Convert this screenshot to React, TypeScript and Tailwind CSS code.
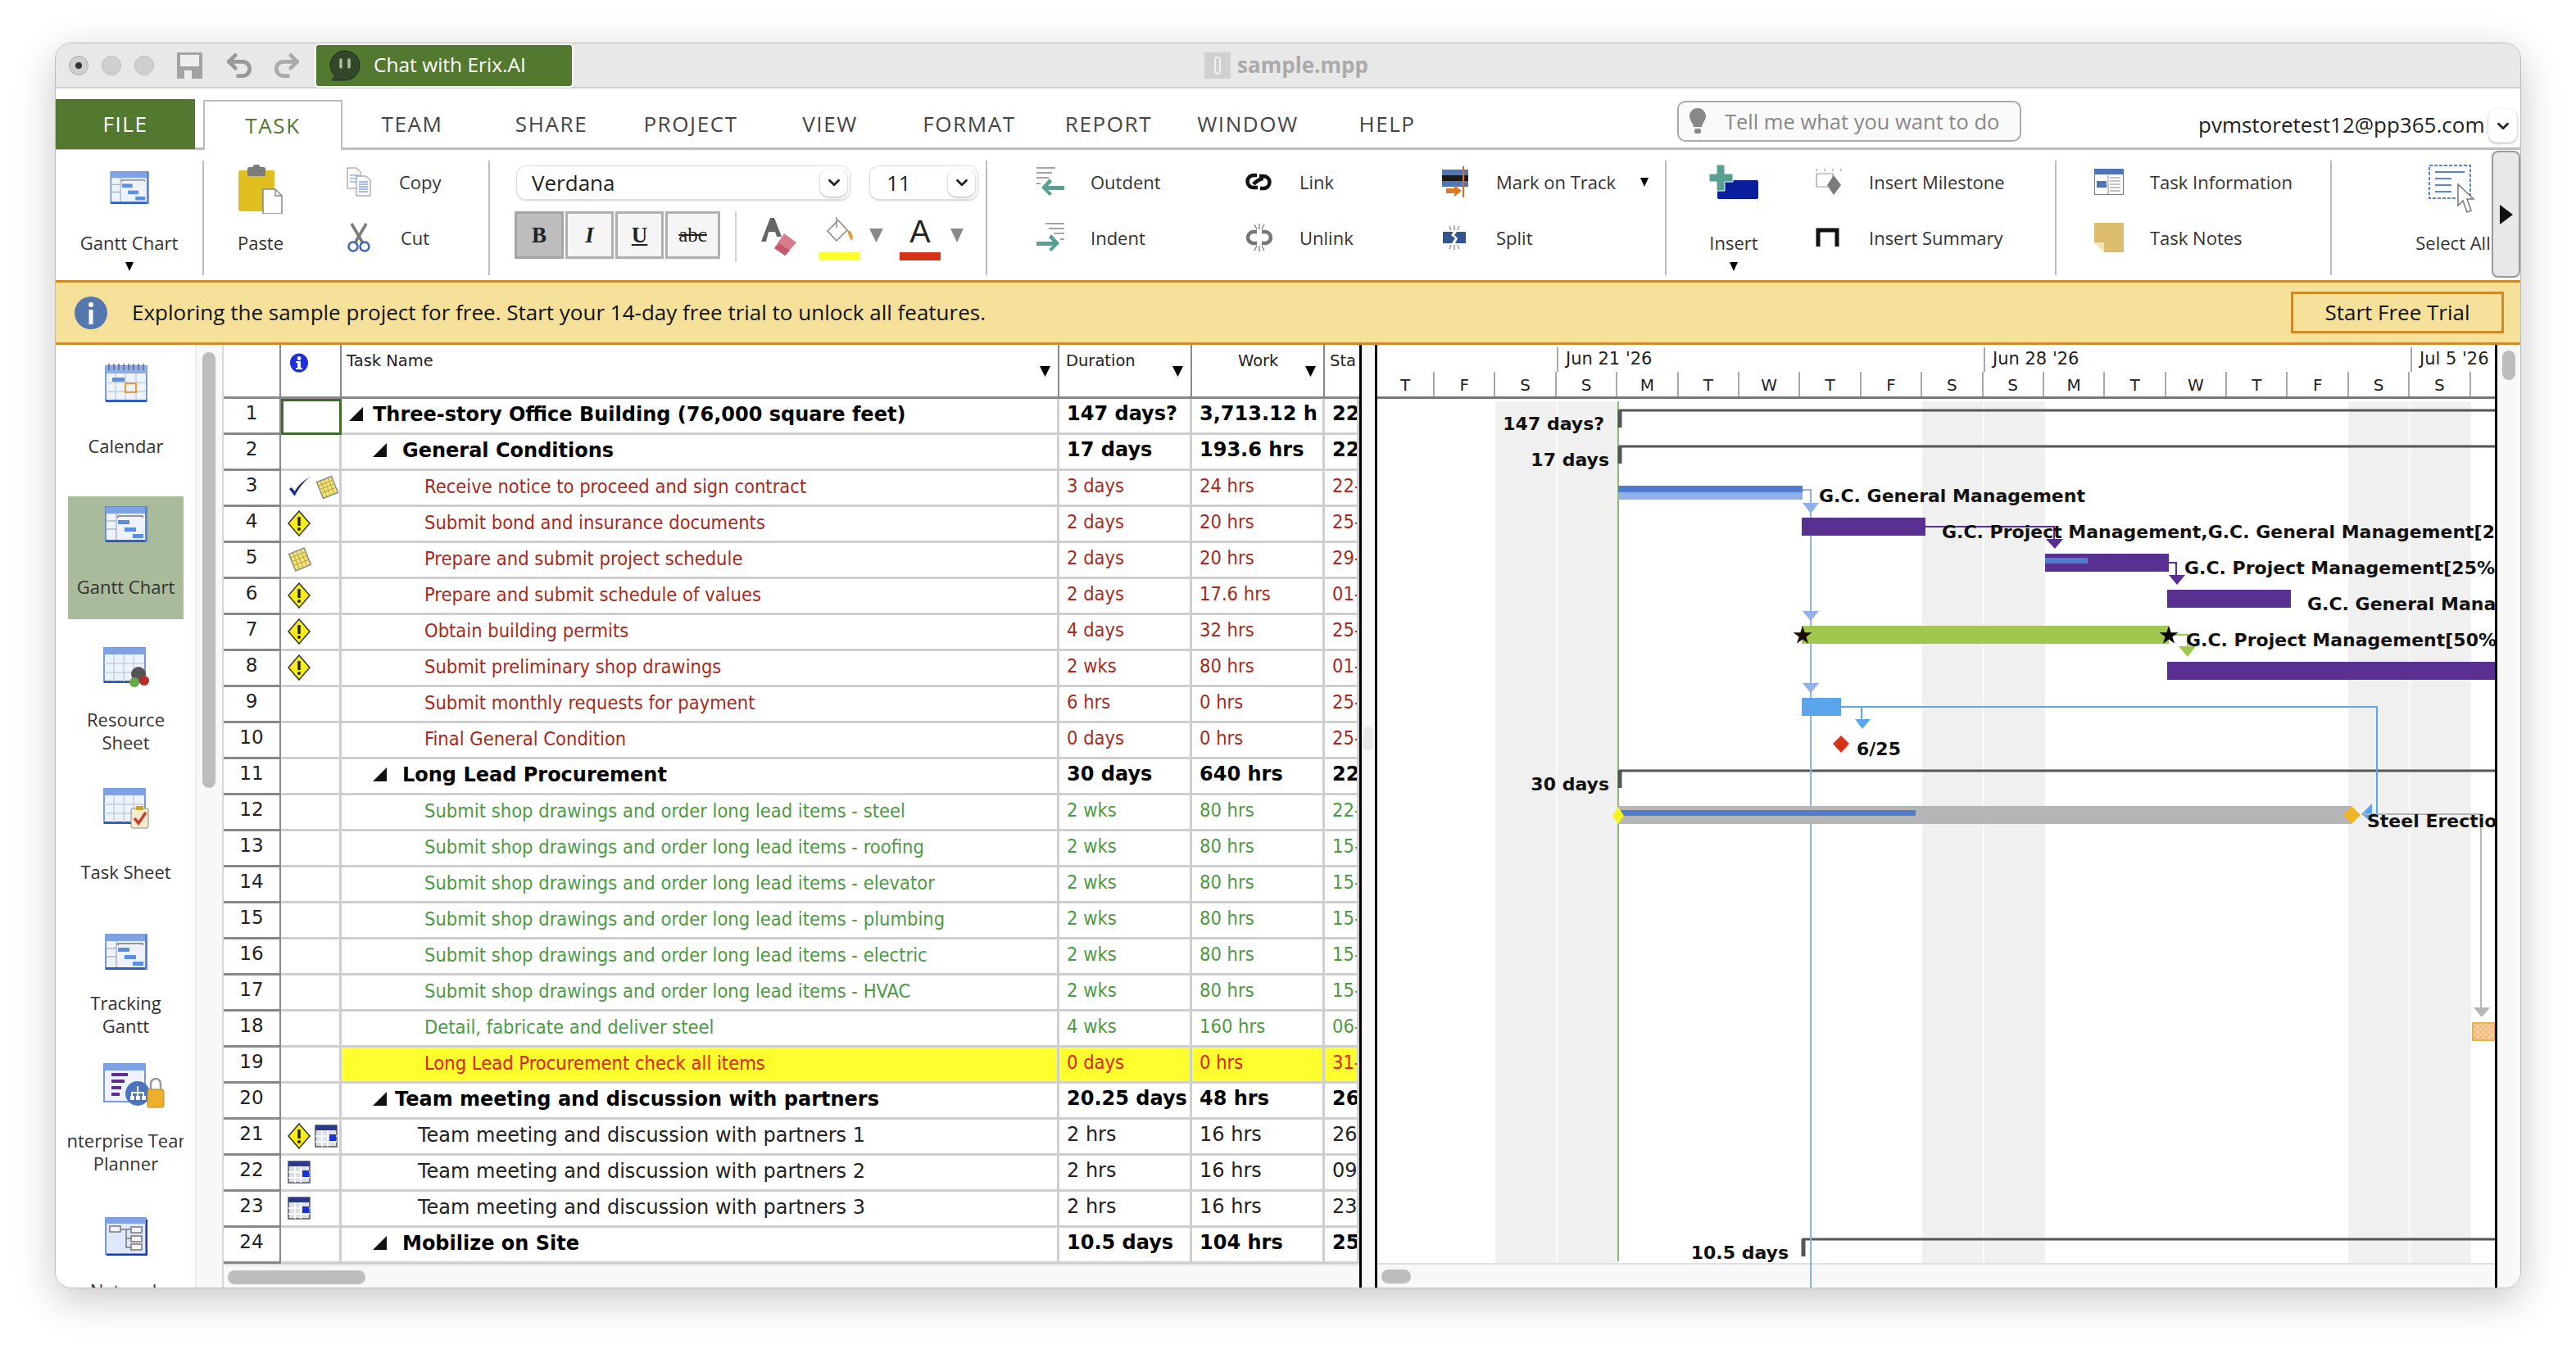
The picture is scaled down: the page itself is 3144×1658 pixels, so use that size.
import React from 'react';
import { ChevronDown, Undo2, Redo2 } from 'lucide-react';

type Kind = 'summary' | 'red' | 'green' | 'plain' | 'flag';
type Mark = 'check' | 'note' | 'warn' | 'cal';
interface Row { name: string; dur: string; work: string; start: string; kind: Kind; x: string; marks?: Mark[] }

const ROWS: Row[] = [
  { name: 'Three-story Office Building (76,000 square feet)', dur: '147 days?', work: '3,713.12 h', start: '22-Jun-26', kind: 'summary', x: 'ml-[9px] gap-[12px]' },
  { name: 'General Conditions', dur: '17 days', work: '193.6 hrs', start: '22-Jun-26', kind: 'summary', x: 'ml-[38px] gap-[19px]' },
  { name: 'Receive notice to proceed and sign contract', dur: '3 days', work: '24 hrs', start: '22-Jun-26', kind: 'red', x: 'ml-[101px]', marks: ['check', 'note'] },
  { name: 'Submit bond and insurance documents', dur: '2 days', work: '20 hrs', start: '25-Jun-26', kind: 'red', x: 'ml-[101px]', marks: ['warn'] },
  { name: 'Prepare and submit project schedule', dur: '2 days', work: '20 hrs', start: '29-Jun-26', kind: 'red', x: 'ml-[101px]', marks: ['note'] },
  { name: 'Prepare and submit schedule of values', dur: '2 days', work: '17.6 hrs', start: '01-Jul-26', kind: 'red', x: 'ml-[101px]', marks: ['warn'] },
  { name: 'Obtain building permits', dur: '4 days', work: '32 hrs', start: '25-Jun-26', kind: 'red', x: 'ml-[101px]', marks: ['warn'] },
  { name: 'Submit preliminary shop drawings', dur: '2 wks', work: '80 hrs', start: '01-Jul-26', kind: 'red', x: 'ml-[101px]', marks: ['warn'] },
  { name: 'Submit monthly requests for payment', dur: '6 hrs', work: '0 hrs', start: '25-Jun-26', kind: 'red', x: 'ml-[101px]' },
  { name: 'Final General Condition', dur: '0 days', work: '0 hrs', start: '25-Jun-26', kind: 'red', x: 'ml-[101px]' },
  { name: 'Long Lead Procurement', dur: '30 days', work: '640 hrs', start: '22-Jun-26', kind: 'summary', x: 'ml-[38px] gap-[19px]' },
  { name: 'Submit shop drawings and order long lead items - steel', dur: '2 wks', work: '80 hrs', start: '22-Jun-26', kind: 'green', x: 'ml-[101px]' },
  { name: 'Submit shop drawings and order long lead items - roofing', dur: '2 wks', work: '80 hrs', start: '15-Jul-26', kind: 'green', x: 'ml-[101px]' },
  { name: 'Submit shop drawings and order long lead items - elevator', dur: '2 wks', work: '80 hrs', start: '15-Jul-26', kind: 'green', x: 'ml-[101px]' },
  { name: 'Submit shop drawings and order long lead items - plumbing', dur: '2 wks', work: '80 hrs', start: '15-Jul-26', kind: 'green', x: 'ml-[101px]' },
  { name: 'Submit shop drawings and order long lead items - electric', dur: '2 wks', work: '80 hrs', start: '15-Jul-26', kind: 'green', x: 'ml-[101px]' },
  { name: 'Submit shop drawings and order long lead items - HVAC', dur: '2 wks', work: '80 hrs', start: '15-Jul-26', kind: 'green', x: 'ml-[101px]' },
  { name: 'Detail, fabricate and deliver steel', dur: '4 wks', work: '160 hrs', start: '06-Jul-26', kind: 'green', x: 'ml-[101px]' },
  { name: 'Long Lead Procurement check all items', dur: '0 days', work: '0 hrs', start: '31-Jul-26', kind: 'flag', x: 'ml-[101px]' },
  { name: 'Team meeting and discussion with partners', dur: '20.25 days', work: '48 hrs', start: '26-Jun-26', kind: 'summary', x: 'ml-[38px] gap-[10px]' },
  { name: 'Team meeting and discussion with partners 1', dur: '2 hrs', work: '16 hrs', start: '26-Jun-26', kind: 'plain', x: 'ml-[93px]', marks: ['warn', 'cal'] },
  { name: 'Team meeting and discussion with partners 2', dur: '2 hrs', work: '16 hrs', start: '09-Jul-26', kind: 'plain', x: 'ml-[93px]', marks: ['cal'] },
  { name: 'Team meeting and discussion with partners 3', dur: '2 hrs', work: '16 hrs', start: '23-Jul-26', kind: 'plain', x: 'ml-[93px]', marks: ['cal'] },
  { name: 'Mobilize on Site', dur: '10.5 days', work: '104 hrs', start: '25-Jun-26', kind: 'summary', x: 'ml-[38px] gap-[19px]' },
];

const DAYS = ['T', 'F', 'S', 'S', 'M', 'T', 'W', 'T', 'F', 'S', 'S', 'M', 'T', 'W', 'T', 'F', 'S', 'S'];
const TABS = ['TASK', 'TEAM', 'SHARE', 'PROJECT', 'VIEW', 'FORMAT', 'REPORT', 'WINDOW', 'HELP'];

const KIND_TEXT: Record<Kind, string> = {
  summary: "font-bold text-black font-['DejaVu_Sans',sans-serif] text-[24px]",
  red: "text-[#a52b1c] font-['DejaVu_Sans_Condensed','DejaVu_Sans',sans-serif] text-[23.5px]",
  green: "text-[#4c9a42] font-['DejaVu_Sans_Condensed','DejaVu_Sans',sans-serif] text-[23.5px]",
  plain: "text-[#222] font-['DejaVu_Sans',sans-serif] text-[24px]",
  flag: "text-[#e3201b] font-['DejaVu_Sans_Condensed','DejaVu_Sans',sans-serif] text-[23.5px]",
};

function Frame({ children, w = 52, h = 44 }: { children?: React.ReactNode; w?: number; h?: number }) {
  return (
    <svg width={w} height={h} viewBox="0 0 52 44">
      <rect x="1" y="1" width="50" height="42" fill="#eef2fb" stroke="#4f79cf" strokeWidth="1.5" />
      <rect x="1" y="1" width="50" height="8" fill="#7fa2e4" />
      <rect x="1" y="41" width="50" height="3" fill="#2f5dbd" />
      <rect x="49" y="1" width="3" height="43" fill="#5d86d8" />
      {children}
    </svg>
  );
}

function GanttGlyph({ w = 52, h = 44 }: { w?: number; h?: number }) {
  return (
    <Frame w={w} h={h}>
      <path d="M1 18H14M1 28H14M14 9V41" stroke="#aab6cc" strokeWidth="1.5" />
      <path d="M16 14V12H46V14" fill="none" stroke="#777" strokeWidth="1.5" />
      <rect x="16" y="17" width="14" height="5" fill="#5b8de0" />
      <rect x="24" y="26" width="14" height="5" fill="#5b8de0" />
      <rect x="34" y="34" width="13" height="5" fill="#5b8de0" />
    </Frame>
  );
}

function SheetGlyph({ extra }: { extra?: React.ReactNode }) {
  return (
    <svg width="56" height="50" viewBox="0 0 56 50">
      <rect x="1" y="1" width="50" height="42" fill="#eef2fb" stroke="#4f79cf" strokeWidth="1.5" />
      <rect x="1" y="1" width="50" height="8" fill="#7fa2e4" />
      <rect x="1" y="41" width="50" height="3" fill="#2f5dbd" />
      <path d="M13 9V42M25 9V42M37 9V42M1 20H50M1 31H50" stroke="#c5cfe2" strokeWidth="1.5" />
      {extra}
    </svg>
  );
}

function CalendarGlyph() {
  return (
    <svg width="52" height="48" viewBox="0 0 52 48">
      <rect x="1" y="4" width="50" height="42" fill="#eef2fb" stroke="#4f79cf" strokeWidth="1.5" />
      <rect x="1" y="4" width="50" height="9" fill="#8eaee6" />
      <path d="M5 1V9M11 1V9M17 1V9M23 1V9M29 1V9M35 1V9M41 1V9M47 1V9" stroke="#667" strokeWidth="1.5" />
      <path d="M13 13V46M25 13V46M38 13V46M1 24H50M1 35H50" stroke="#c5cfe2" strokeWidth="1.5" />
      <rect x="9" y="18" width="15" height="5" fill="#5b8de0" />
      <rect x="25" y="25" width="13" height="11" fill="none" stroke="#e79a3a" strokeWidth="2" />
      <rect x="1" y="45" width="50" height="3" fill="#2f5dbd" />
    </svg>
  );
}

function EnterpriseGlyph() {
  return (
    <svg width="76" height="56" viewBox="0 0 76 56" className="ml-[20px]">
      <rect x="1" y="1" width="50" height="46" fill="#eef2fb" stroke="#4f79cf" strokeWidth="1.5" />
      <rect x="1" y="1" width="50" height="8" fill="#7fa2e4" />
      <path d="M10 14H30M10 22H26M10 30H22M10 38H20" stroke="#5a2f96" strokeWidth="4" />
      <circle cx="42" cy="37" r="15" fill="#4a73c0" />
      <path d="M42 28V33M35 40V36H49V40M42 33V40" stroke="#fff" strokeWidth="2" fill="none" />
      <rect x="33" y="40" width="5" height="5" fill="#fff" />
      <rect x="40" y="40" width="5" height="5" fill="#fff" />
      <rect x="47" y="40" width="5" height="5" fill="#fff" />
      <rect x="54" y="32" width="20" height="22" rx="2" fill="#eab02c" stroke="#b98a1f" />
      <path d="M58 32V25a6 6 0 0 1 12 0V32" fill="none" stroke="#999" strokeWidth="2.5" />
    </svg>
  );
}

function NetworkGlyph() {
  return (
    <svg width="52" height="47" viewBox="0 0 52 47">
      <rect x="1" y="1" width="49" height="44" fill="#dfe7fb" stroke="#4f79cf" strokeWidth="1.5" />
      <rect x="1" y="1" width="49" height="7" fill="#7fa2e4" />
      <path d="M50 3H52V47H2V45H50Z" fill="#1c3a9e" />
      <g fill="#f4f4f4" stroke="#777" strokeWidth="1.5">
        <rect x="6" y="11" width="13" height="7" />
        <rect x="32" y="12" width="13" height="7" />
        <rect x="32" y="23" width="13" height="7" />
        <rect x="32" y="33" width="13" height="7" />
      </g>
      <path d="M19 15H32M26 15V37H32M26 26H32" stroke="#777" strokeWidth="1.5" fill="none" />
    </svg>
  );
}

function Warn() {
  return (
    <svg width="28" height="32" viewBox="0 0 28 32">
      <path d="M14 1L27 16L14 31L1 16Z" fill="#f7ec16" stroke="#333" strokeWidth="1.5" />
      <path d="M14 8V19" stroke="#222" strokeWidth="3.5" />
      <circle cx="14" cy="23" r="2" fill="#222" />
    </svg>
  );
}

function Note() {
  return (
    <svg width="30" height="32" viewBox="0 0 30 32">
      <g transform="rotate(-22 15 16)">
        <rect x="5" y="5" width="20" height="22" fill="#f3e27a" stroke="#888" strokeWidth="1.5" />
        <path d="M5 10H25M5 15H25M5 20H25M10 5V27M15 5V27M20 5V27" stroke="#b7a746" strokeWidth="1" />
      </g>
    </svg>
  );
}

function Check() {
  return (
    <svg width="30" height="32" viewBox="0 0 30 32">
      <path d="M2 18L9 27C14 17 21 8 29 2C20 7 13 14 9 21L5 16Z" fill="#1c2f8c" />
    </svg>
  );
}

function CalMark() {
  return (
    <svg width="28" height="28" viewBox="0 0 28 28">
      <rect x="1" y="1" width="26" height="26" fill="#dde0e6" stroke="#555" strokeWidth="1.5" />
      <rect x="1" y="1" width="26" height="6" fill="#2a3a8a" />
      <path d="M9 7V27M16 7V27M1 14H27M1 21H27" stroke="#fff" strokeWidth="1.5" />
      <rect x="18" y="12" width="8" height="8" fill="#1533d6" />
    </svg>
  );
}

function MarkIcon({ m }: { m: Mark }) {
  if (m === 'warn') return <Warn />;
  if (m === 'note') return <Note />;
  if (m === 'check') return <Check />;
  return <CalMark />;
}

function DownTri({ className = 'text-black', w = 12, h = 12 }: { className?: string; w?: number; h?: number }) {
  return (
    <svg width={w} height={h} viewBox="0 0 12 12" preserveAspectRatio="none" className={className}>
      <polygon points="0,0 12,0 6,12" fill="currentColor" />
    </svg>
  );
}

function RibbonChevron({ className }: { className: string }) {
  return (
    <span className={`flex items-center justify-center rounded-[10px] bg-white shadow-[0_1px_3px_rgba(0,0,0,0.35)] ${className}`}>
      <ChevronDown size={22} strokeWidth={3} className="text-[#222]" />
    </span>
  );
}

function BigButton({ label, icon, arrow, iconTop = 'mt-0' }: { label: string; icon: React.ReactNode; arrow?: boolean; iconTop?: string }) {
  return (
    <div className="flex w-full flex-col items-center pt-[5px]">
      <div className={`flex h-[58px] shrink-0 items-start justify-center ${iconTop}`}>{icon}</div>
      <div className="mt-[22px] h-[30px] whitespace-nowrap text-[22px] leading-[30px] text-[#333]">{label}</div>
      {arrow && <DownTri className="mt-[9px] text-black" w={10} h={11} />}
    </div>
  );
}

function SmallItem({ label, icon, slot = 'w-[66px]', suffix }: { label: string; icon: React.ReactNode; slot?: string; suffix?: React.ReactNode }) {
  return (
    <div className="flex h-[44px] items-center">
      <span className={`flex shrink-0 items-center ${slot}`}>{icon}</span>
      <span className="whitespace-nowrap text-[22px] text-[#333]">{label}</span>
      {suffix}
    </div>
  );
}

function RibbonBar() {
  return (
    <div className="relative flex h-[159px] bg-white pb-[6px] pt-[13px]">
      {/* view */}
      <div className="h-[140px] w-[181px] shrink-0 border-r-2 border-[#bdbdbd]">
        <BigButton label="Gantt Chart" arrow icon={<GanttGlyph w={48} h={40} />} iconTop="pt-[8px]" />
      </div>

      {/* clipboard */}
      <div className="flex h-[140px] w-[349px] shrink-0 border-r-2 border-[#bdbdbd]">
        <div className="w-[138px]">
          <BigButton
            label="Paste"
            icon={
              <svg width="56" height="60" viewBox="0 0 56 60">
                <rect x="1" y="7" width="44" height="50" rx="2" fill="#e0c020" />
                <rect x="12" y="3" width="22" height="11" rx="2" fill="#7b7b7b" />
                <rect x="19" y="0" width="8" height="6" rx="2" fill="#7b7b7b" />
                <path d="M31 30H46L54 38V60H31Z" fill="#fff" stroke="#888" strokeWidth="1.5" />
                <path d="M46 30V38H54" fill="none" stroke="#888" strokeWidth="1.5" />
              </svg>
            }
          />
        </div>
        <div className="ml-[36px] flex flex-col gap-[24px] pt-[4px]">
          <SmallItem
            label="Copy"
            slot="w-[64px]"
            icon={
              <svg width="30" height="36" viewBox="0 0 30 36">
                <path d="M1 1H12L17 6V26H1Z" fill="#fff" stroke="#8a8a8a" />
                <path d="M4 10H14M4 14H14M4 18H14" stroke="#5b8de0" />
                <path d="M12 11H24L29 16V35H12Z" fill="#fff" stroke="#8a8a8a" />
                <path d="M15 18H26M15 21H26M15 24H26M15 27H26M15 30H26" stroke="#4a74c9" />
              </svg>
            }
          />
          <SmallItem
            label="Cut"
            slot="w-[66px]"
            icon={
              <svg width="30" height="36" viewBox="0 0 30 36">
                <path d="M6 1L20 25M24 1L10 25" stroke="#7b7b7b" strokeWidth="3.5" />
                <circle cx="8" cy="29" r="5.5" fill="none" stroke="#3b67b8" strokeWidth="2.5" />
                <circle cx="22" cy="29" r="5.5" fill="none" stroke="#3b67b8" strokeWidth="2.5" />
              </svg>
            }
          />
        </div>
      </div>

      {/* font */}
      <div className="h-[140px] w-[607px] shrink-0 border-r-2 border-[#bdbdbd] pl-[32px] pt-[6px]">
        <div className="flex gap-[23px]">
          <div className="flex h-[42px] w-[408px] items-center justify-between rounded-[12px] border border-[#ddd] pl-[18px] pr-[3px] shadow-[0_1px_2px_rgba(0,0,0,0.2)]">
            <span className="text-[26px] text-[#222]">Verdana</span>
            <RibbonChevron className="h-[33px] w-[33px]" />
          </div>
          <div className="flex h-[42px] w-[133px] items-center justify-between rounded-[12px] border border-[#ddd] pl-[20px] pr-[3px] shadow-[0_1px_2px_rgba(0,0,0,0.2)]">
            <span className="text-[26px] text-[#222]">11</span>
            <RibbonChevron className="h-[33px] w-[33px]" />
          </div>
        </div>
        <div className="ml-[-2px] mt-[14px] flex items-start">
          <div className="flex gap-[2px] font-['Liberation_Serif',serif] text-[27px] text-[#222]">
            <span className="flex h-[58px] w-[60px] items-center justify-center border-[3px] border-[#a5a5a5] bg-[#bdbdbd] font-bold">B</span>
            <span className="flex h-[58px] w-[59px] items-center justify-center border-[3px] border-[#b0b0b0] bg-[#f5f5f5] font-bold italic">I</span>
            <span className="flex h-[58px] w-[59px] items-center justify-center border-[3px] border-[#b0b0b0] bg-[#f5f5f5] font-bold underline">U</span>
            <span className="flex h-[58px] w-[67px] items-center justify-center border-[3px] border-[#b0b0b0] bg-[#f5f5f5] text-[25px] line-through">abc</span>
          </div>
          <span className="ml-[18px] h-[62px] w-[2px] bg-[#d0d0d0]" />
          <svg width="46" height="48" viewBox="0 0 46 48" className="ml-[28px] mt-[7px]">
            <path d="M2 30L13 1H18L27 24H21L19 18H11L8 30Z" fill="#666" />
            <path d="M30 20L45 31L31 47L18 38Z" fill="#d97b8c" />
            <path d="M18 38L24 32L37 41L31 47Z" fill="#c4586c" />
          </svg>
          <div className="ml-[27px] flex w-[50px] flex-col items-center pt-[6px]">
            <svg width="36" height="38" viewBox="0 0 36 38">
              <path d="M3 18L16 5L27 17L14 30Z" fill="#fff" stroke="#888" strokeWidth="1.5" />
              <path d="M14 1V14" stroke="#888" strokeWidth="1.5" />
              <path d="M27 17C33 18 35 24 33 30C30 27 28 22 27 17Z" fill="#e79a3a" />
            </svg>
            <span className="mt-[6px] h-[10px] w-full bg-[#ffff2e]" />
          </div>
          <DownTri className="ml-[11px] mt-[21px] text-[#888]" w={17} h={17} />
          <div className="ml-[20px] flex w-[50px] flex-col items-center">
            <span className="h-[50px] font-['Liberation_Sans',sans-serif] text-[38px] leading-[50px] text-[#222]">A</span>
            <span className="h-[10px] w-full bg-[#d6321a]" />
          </div>
          <DownTri className="ml-[12px] mt-[21px] text-[#888]" w={16} h={17} />
        </div>
      </div>

      {/* schedule */}
      <div className="grid h-[140px] w-[829px] shrink-0 grid-cols-[256px_240px_1fr] content-start gap-y-[24px] border-r-2 border-[#bdbdbd] pl-[59px] pt-[4px]">
        <SmallItem
          label="Outdent"
          slot="w-[67px]"
          icon={
            <svg width="36" height="36" viewBox="0 0 36 36">
              <path d="M1 1H24M1 7H20M1 13H16M1 20H6" stroke="#888" strokeWidth="1.5" />
              <path d="M17 14L7 25L17 35L20 32L15 28H35V23H15L20 18Z" fill="#58a090" />
            </svg>
          }
        />
        <SmallItem
          label="Link"
          icon={
            <svg width="32" height="26" viewBox="0 0 32 26">
              <path d="M14 5H10a7.5 7.5 0 0 0 0 15h5M18 21h4a7.5 7.5 0 0 0 0-15h-5M10 16C13 12 19 9 22 9" fill="none" stroke="#111" strokeWidth="4.5" />
            </svg>
          }
        />
        <SmallItem
          label="Mark on Track"
          icon={
            <svg width="34" height="38" viewBox="0 0 34 38">
              <rect x="0" y="4" width="32" height="21" fill="#4f77b5" />
              <rect x="0" y="11" width="32" height="7" fill="#1a1a1a" />
              <path d="M26 0V38" stroke="#c9742a" strokeWidth="2" />
              <path d="M5 27H15V23L24 30L15 37V33H5Z" fill="#d97a26" />
            </svg>
          }
          suffix={<DownTri className="ml-[30px] text-black" w={10} h={11} />}
        />
        <SmallItem
          label="Indent"
          slot="w-[67px]"
          icon={
            <svg width="36" height="36" viewBox="0 0 36 36">
              <path d="M12 1H35M16 7H35M22 13H35M30 20H35" stroke="#888" strokeWidth="1.5" />
              <path d="M19 14L29 25L19 35L16 32L21 28H1V23H21L16 18Z" fill="#58a090" />
            </svg>
          }
        />
        <SmallItem
          label="Unlink"
          icon={
            <svg width="34" height="36" viewBox="0 0 34 36">
              <path d="M14 11H10a7 7 0 0 0 0 14h4M20 11h4a7 7 0 0 1 0 14h-4" fill="none" stroke="#777" strokeWidth="4.5" />
              <path d="M17 1V8M11 2L14 8M23 2L20 8M17 28V35M11 34L14 28M23 34L20 28" stroke="#777" strokeWidth="1.2" />
            </svg>
          }
        />
        <SmallItem
          label="Split"
          icon={
            <svg width="30" height="30" viewBox="0 0 30 30">
              <path d="M1 8H14L11 12L16 16L12 22H1Z" fill="#35558f" />
              <path d="M29 8H18L15 12L19 16L16 22H29Z" fill="#35558f" />
              <path d="M9 1L11 6M15 0V6M21 1L19 6M9 29L11 24M15 30V24M21 29L19 24" stroke="#667" strokeWidth="1" />
            </svg>
          }
        />
      </div>

      {/* insert */}
      <div className="flex h-[140px] w-[476px] shrink-0 border-r-2 border-[#bdbdbd]">
        <div className="w-[164px]">
          <BigButton
            label="Insert"
            arrow
            icon={
              <svg width="60" height="42" viewBox="0 0 60 42">
                <rect x="10" y="19" width="50" height="23" rx="2" fill="#0a1e9e" />
                <path d="M9 0H19V11H29V21H19V32H9V21H0V11H9Z" fill="#58a090" stroke="#fff" strokeWidth="1" />
              </svg>
            }
          />
        </div>
        <div className="ml-[18px] flex flex-col gap-[24px] pt-[4px]">
          <SmallItem
            label="Insert Milestone"
            slot="w-[65px]"
            icon={
              <svg width="32" height="32" viewBox="0 0 32 32">
                <path d="M1 0V3M11 0V3M21 0V3M31 0V3M1 6H21V22H1Z" fill="none" stroke="#999" strokeWidth="1.2" />
                <path d="M22 8L31 20L22 32L14 20Z" fill="#7b7b7b" />
              </svg>
            }
          />
          <SmallItem
            label="Insert Summary"
            slot="w-[65px]"
            icon={
              <svg width="30" height="24" viewBox="0 0 30 24">
                <path d="M3 23V3H26V23" fill="none" stroke="#111" strokeWidth="5" />
              </svg>
            }
          />
        </div>
      </div>

      {/* properties */}
      <div className="flex h-[140px] w-[336px] shrink-0 flex-col gap-[24px] border-r-2 border-[#bdbdbd] pl-[46px] pt-[4px]">
        <SmallItem
          label="Task Information"
          slot="w-[68px]"
          icon={
            <svg width="36" height="32" viewBox="0 0 36 32">
              <rect x="0.5" y="0.5" width="35" height="31" fill="#fff" stroke="#777" />
              <rect x="0" y="0" width="36" height="7" fill="#4f73b5" />
              <rect x="3" y="15" width="12" height="8" fill="#4f73b5" />
              <path d="M19 11H32M19 15H32M19 19H32M19 23H32M19 27H32M17 8V31" stroke="#888" />
            </svg>
          }
        />
        <SmallItem
          label="Task Notes"
          slot="w-[68px]"
          icon={
            <svg width="36" height="36" viewBox="0 0 36 36">
              <path d="M0 0H36V36H12L0 24Z" fill="#dcbd6e" />
              <path d="M0 24H12V36Z" fill="#f3e6bf" />
            </svg>
          }
        />
      </div>

      {/* select */}
      <div className="h-[140px] w-[195px] shrink-0 overflow-hidden pl-[88px]">
        <div className="w-[120px]">
          <BigButton
            label="Select All"
            icon={
              <svg width="60" height="60" viewBox="0 0 60 60">
                <rect x="1" y="1" width="50" height="40" fill="#fff" stroke="#5b84cf" strokeWidth="2" strokeDasharray="4 2" />
                <path d="M8 9H44M8 17H28M8 25H28M8 33H28" stroke="#5b84cf" strokeWidth="2" />
                <path d="M36 24V50L42 44L47 58L52 56L47 42H55Z" fill="#fff" stroke="#777" strokeWidth="1.5" />
              </svg>
            }
          />
        </div>
      </div>

      {/* scroller */}
      <div className="absolute bottom-[3px] right-0 top-[1px] flex w-[35px] items-center justify-center rounded-[8px] border-2 border-[#999] bg-[#e8e8e8]">
        <svg width="16" height="24" viewBox="0 0 16 24">
          <polygon points="0,0 16,12 0,24" fill="#111" />
        </svg>
      </div>
    </div>
  );
}

function Sidebar() {
  return (
    <div className="flex w-[172px] shrink-0 flex-col gap-[22px] overflow-hidden border-r-2 border-[#eee] pt-[13px] text-[22px] leading-[28px] text-[#333]">
      <SideItem icon={<CalendarGlyph />} iconClass="mt-[-3px]" lines={['Calendar']} />
      <SideItem icon={<GanttGlyph />} lines={['Gantt Chart']} active />
      <SideItem
        icon={
          <SheetGlyph
            extra={
              <g>
                <circle cx="43" cy="33" r="9" fill="#555" />
                <circle cx="38" cy="43" r="6" fill="#66aa44" />
                <circle cx="50" cy="41" r="6" fill="#b5302a" />
              </g>
            }
          />
        }
        lines={['Resource', 'Sheet']}
      />
      <SideItem
        icon={
          <SheetGlyph
            extra={
              <g>
                <rect x="34" y="25" width="21" height="24" rx="2" fill="#f5ecd0" stroke="#888" />
                <rect x="40" y="22" width="9" height="5" fill="#c9a53a" />
                <path d="M38 37L43 43L52 30" fill="none" stroke="#d03a2a" strokeWidth="3.5" />
              </g>
            }
          />
        }
        labelClass="mt-[38px]"
        lines={['Task Sheet']}
      />
      <SideItem icon={<GanttGlyph />} iconClass="mt-[6px]" labelClass="mt-[26px]" lines={['Tracking', 'Gantt']} />
      <SideItem icon={<EnterpriseGlyph />} iconClass="mt-[-8px]" labelClass="mt-[22px]" lines={['Enterprise Team', 'Planner']} />
      <SideItem icon={<NetworkGlyph />} iconClass="mt-[8px]" labelClass="mt-[33px]" lines={['Network']} />
    </div>
  );
}

function SideItem({ icon, lines, active, iconClass = '', labelClass }: { icon: React.ReactNode; lines: string[]; active?: boolean; iconClass?: string; labelClass?: string }) {
  const top = labelClass ?? (lines.length > 1 ? 'mt-[24px]' : 'mt-[34px]');
  return (
    <div className={`ml-[15px] flex h-[150px] w-[141px] shrink-0 flex-col items-center pt-[12px] ${active ? 'bg-[#a9bb9b]' : ''}`}>
      <div className="flex h-[50px] shrink-0 items-start">
        <div className={iconClass}>{icon}</div>
      </div>
      <div className={`w-full overflow-hidden ${top}`}>
        {lines.map(l => (
          <div key={l} className="flex justify-center whitespace-nowrap">
            <span className="shrink-0">{l}</span>
          </div>
        ))}
      </div>
    </div>
  );
}

function TableGrid() {
  return (
    <div className="flex w-[1386px] shrink-0 flex-col bg-white">
      <div className="flex h-[66px] shrink-0 border-b-[3px] border-[#888] font-['DejaVu_Sans',sans-serif] text-[19.5px] text-[#222]">
        <div className="w-[70px] shrink-0 border-r-2 border-[#888]" />
        <div className="w-[74px] shrink-0 border-r-2 border-[#888] pl-[10px] pt-[10px]">
          <svg width="24" height="24" viewBox="0 0 24 24">
            <ellipse cx="12" cy="12" rx="11" ry="11.5" fill="#1f2fe0" />
            <circle cx="12" cy="6.5" r="2.4" fill="#fff" />
            <path d="M8 10H14V18H16V20H8V18H10V12H8Z" fill="#fff" />
          </svg>
        </div>
        <div className="relative w-[876px] shrink-0 border-r-2 border-[#888] pl-[6px] pt-[5px]">
          Task Name
          <DownTri className="absolute right-[9px] top-[26px] text-black" w={13} h={13} />
        </div>
        <div className="relative w-[162px] shrink-0 border-r-2 border-[#888] pl-[8px] pt-[5px]">
          Duration
          <DownTri className="absolute right-[9px] top-[26px] text-black" w={13} h={13} />
        </div>
        <div className="relative w-[162px] shrink-0 border-r-2 border-[#888] pl-[56px] pt-[5px]">
          Work
          <DownTri className="absolute right-[9px] top-[26px] text-black" w={13} h={13} />
        </div>
        <div className="w-[42px] shrink-0 whitespace-nowrap pl-[6px] pt-[5px]">
          <div className="w-[33px] overflow-hidden">Start</div>
        </div>
      </div>
      {ROWS.map((r, i) => (
        <TableRow key={i} n={i + 1} row={r} selected={i === 0} />
      ))}
    </div>
  );
}

function TableRow({ n, row, selected }: { n: number; row: Row; selected: boolean }) {
  const flag = row.kind === 'flag';
  const text = KIND_TEXT[row.kind];
  const bg = flag ? 'bg-[#ffff2e]' : '';
  const cell = 'shrink-0 overflow-hidden whitespace-nowrap border-b-[3px] border-r-[3px] border-[#cfcfcf] leading-[36px]';
  return (
    <div className="flex h-[44px] shrink-0">
      <div className="w-[70px] shrink-0 border-b-[3px] border-r-2 border-[#888] text-center font-['DejaVu_Sans',sans-serif] text-[23px] leading-[34px] text-[#222]">{n}</div>
      <div className={`flex w-[74px] shrink-0 items-center gap-[5px] pb-[2px] pl-[8px] ${selected ? 'border-[3px] border-[#3f6b2a]' : 'border-b-[3px] border-r-[3px] border-[#cfcfcf]'}`}>
        {row.marks?.map((m, k) => (
          <MarkIcon key={k} m={m} />
        ))}
      </div>
      <div className={`flex w-[876px] items-center pb-[4px] ${cell} ${text} ${bg}`}>
        <div className={`flex items-center ${row.x}`}>
          {row.kind === 'summary' && (
            <svg width="17" height="17" viewBox="0 0 17 17">
              <polygon points="17,0 17,17 0,17" fill="#111" />
            </svg>
          )}
          <span>{row.name}</span>
        </div>
      </div>
      <div className={`w-[162px] pl-[9px] ${cell} ${text} ${bg}`}>{row.dur}</div>
      <div className={`w-[162px] pl-[9px] ${cell} ${text} ${bg}`}>{row.work}</div>
      <div className={`w-[42px] overflow-hidden pl-[9px] ${cell} ${text} ${bg}`}>{row.start}</div>
    </div>
  );
}

function star(cx: number, cy: number, r: number) {
  const pts: string[] = [];
  for (let i = 0; i < 10; i++) {
    const a = -Math.PI / 2 + (i * Math.PI) / 5;
    const rr = i % 2 === 0 ? r : r * 0.38;
    pts.push(`${cx + rr * Math.cos(a)},${cy + rr * Math.sin(a)}`);
  }
  return pts.join(' ');
}

function GanttCanvas() {
  const label = "font-['DejaVu_Sans',sans-serif] font-bold text-[22px] fill-[#111]";
  return (
    <svg width="1364" height="1084" viewBox="1681 488 1364 1084" className="absolute left-0 top-0">
      <defs>
        <clipPath id="chartClip">
          <rect x="1681" y="488" width="1364" height="1084" />
        </clipPath>
        <pattern id="hatch" width="7" height="7" patternUnits="userSpaceOnUse">
          <rect width="7" height="7" fill="#f7cfa0" />
          <path d="M0 3.5L3.5 0L7 3.5L3.5 7Z" fill="none" stroke="#f0a868" strokeWidth="1" />
        </pattern>
      </defs>
      <g clipPath="url(#chartClip)">
        {[1825, 2346, 2866].map(x => (
          <g key={x}>
            <rect x={x} y="490" width="150" height="1052" fill="#f0f0f0" />
            <rect x={x + 74} y="490" width="2" height="1052" fill="#fafafa" />
          </g>
        ))}
        <path d="M1975 490V1540" stroke="#8db878" strokeWidth="2" />

        {/* summary brackets */}
        <path d="M1977 522V501H3045M1977 566V545H3045M1977 962V941H3045M2201 1534V1513H3045" fill="none" stroke="#555" strokeWidth="3" />
        <path d="M1977 501V522M1977 545V566M1977 941V962M2201 1513V1534" stroke="#555" strokeWidth="5" />

        {/* row 3 */}
        <rect x="1975" y="593" width="225" height="8" fill="#4f7ccc" />
        <rect x="1975" y="601" width="225" height="9" fill="#90aee8" />

        {/* status line */}
        <path d="M2200 598H2210V1572" fill="none" stroke="#8fb0e8" strokeWidth="2" />
        <polygon points="2200,614 2220,614 2210,627" fill="#8fb0e8" />
        <polygon points="2200,746 2220,746 2210,758" fill="#8fb0e8" />
        <polygon points="2200,834 2220,834 2210,846" fill="#8fb0e8" />

        {/* purple tasks */}
        <rect x="2199" y="632" width="151" height="22" fill="#573092" />
        <path d="M2350 643H2507V660" fill="none" stroke="#573092" strokeWidth="2" />
        <polygon points="2497,658 2518,658 2508,670" fill="#573092" />
        <rect x="2496" y="676" width="151" height="22" fill="#573092" />
        <rect x="2496" y="681" width="52" height="7" fill="#4f7ccc" />
        <path d="M2647 687H2656V704" fill="none" stroke="#573092" strokeWidth="2" />
        <polygon points="2647,702 2667,702 2657,714" fill="#573092" />
        <rect x="2645" y="720" width="151" height="22" fill="#573092" />
        <rect x="2645" y="808" width="400" height="22" fill="#573092" />

        {/* green task */}
        <rect x="2199" y="764" width="448" height="22" fill="#a0c84e" />
        <path d="M2647 775H2670V792" fill="none" stroke="#a0c84e" strokeWidth="2" />
        <polygon points="2659,789 2680,789 2670,802" fill="#a0c84e" />
        <polygon points={star(2200, 776, 12)} fill="#1a0d05" />
        <polygon points={star(2647, 776, 12)} fill="#000" />

        {/* row 9 */}
        <rect x="2199" y="852" width="48" height="22" fill="#5aa5ec" />
        <path d="M2247 863H2901V994H2890M2272 863V880" fill="none" stroke="#5aa5ec" strokeWidth="2" />
        <polygon points="2264,878 2283,878 2273,890" fill="#5aa5ec" />
        <polygon points="2895,981 2895,1004 2882,994" fill="#5aa5ec" />

        {/* milestone */}
        <polygon points="2247,898 2257,908 2247,919 2237,908" fill="#d83218" />

        {/* long lead */}
        <rect x="1975" y="984" width="895" height="22" fill="#b5b5b5" />
        <rect x="1975" y="989" width="363" height="7" fill="#4f7ccc" />
        <polygon points="1975,985 1982,996 1975,1006 1968,996" fill="#f5f51e" />
        <polygon points="2870,984 2881,995 2870,1006 2860,995" fill="#f0b428" />
        <path d="M2884 994H3028V1232" fill="none" stroke="#b5b5b5" strokeWidth="2" />
        <polygon points="3019,1230 3039,1230 3029,1242" fill="#b5b5b5" />
        <rect x="3018" y="1249" width="27" height="21" fill="url(#hatch)" stroke="#edb53f" strokeWidth="2" />

        <text x="1958" y="525" textAnchor="end" className={label}>147 days?</text>
        <text x="1964" y="569" textAnchor="end" className={label}>17 days</text>
        <text x="1964" y="965" textAnchor="end" className={label}>30 days</text>
        <text x="2183" y="1537" textAnchor="end" className={label}>10.5 days</text>
        <text x="2220" y="613" className={label}>G.C. General Management</text>
        <text x="2370" y="657" className={label}>G.C. Project Management,G.C. General Management[25%]</text>
        <text x="2666" y="701" className={label}>G.C. Project Management[25%]</text>
        <text x="2816" y="745" className={label}>G.C. General Management</text>
        <text x="2668" y="789" className={label}>G.C. Project Management[50%]</text>
        <text x="2266" y="922" className={label}>6/25</text>
        <text x="2889" y="1010" className={label}>Steel Erection</text>
      </g>
    </svg>
  );
}

function GanttPane() {
  return (
    <div className="relative flex w-[1364px] shrink-0 flex-col bg-white">
      <div className="flex h-[33px] shrink-0 items-end font-['DejaVu_Sans',sans-serif] text-[21px] text-[#222]">
        <div className="w-[219px] shrink-0" />
        <div className="h-[30px] w-[521px] shrink-0 border-l-2 border-[#aaa] pl-[9px] leading-[28px]">Jun 21 '26</div>
        <div className="h-[30px] w-[521px] shrink-0 border-l-2 border-[#aaa] pl-[9px] leading-[28px]">Jun 28 '26</div>
        <div className="h-[30px] flex-1 overflow-hidden whitespace-nowrap border-l-2 border-[#aaa] pl-[9px] leading-[28px]">Jul 5 '26</div>
      </div>
      <div className="flex h-[33px] shrink-0 border-b-[3px] border-[#777] font-['DejaVu_Sans',sans-serif] text-[20px] leading-[32px] text-[#222]">
        {DAYS.map((d, i) => (
          <div key={i} className={`shrink-0 border-r-2 border-[#aaa] text-center ${i === 0 ? 'w-[70px]' : 'w-[74.4px]'}`}>{d}</div>
        ))}
      </div>
      <div className="h-[1055px] shrink-0" />
      <div className="h-[29px] shrink-0 border-t-2 border-[#e0e0e0] bg-[#f8f8f8] pl-[5px] pt-[6px]">
        <div className="h-[17px] w-[36px] rounded-full bg-[#bdbdbd]" />
      </div>
      <div className="absolute left-0 top-[67px]">
        <GanttCanvas />
      </div>
    </div>
  );
}

export default function App() {
  return (
    <div className="h-[1658px] w-[3144px] overflow-hidden bg-white pl-[67px] pt-[52px] font-['Open_Sans',sans-serif]">
      <div className="flex h-[1521px] w-[3010px] flex-col overflow-hidden rounded-[20px] border border-[#bdbdbd] bg-white shadow-[0_14px_50px_rgba(0,0,0,0.22)]">
        {/* title bar */}
        <div className="flex h-[55px] shrink-0 items-center border-b-2 border-[#d0d0d0] bg-[#e8e8e8]">
          <div className="ml-[16px] flex items-center gap-[16px]">
            <span className="flex h-[24px] w-[24px] items-center justify-center rounded-full border border-[#aaa] bg-[#cfcfcf]">
              <span className="h-[8px] w-[8px] rounded-full bg-[#333]" />
            </span>
            <span className="h-[24px] w-[24px] rounded-full border border-[#bbb] bg-[#cfcfcf]" />
            <span className="h-[24px] w-[24px] rounded-full border border-[#bbb] bg-[#cfcfcf]" />
          </div>
          <svg width="31" height="32" viewBox="0 0 31 32" className="ml-[28px]">
            <path d="M0 0H31V32H0Z" fill="#a3a3a3" />
            <rect x="4" y="3" width="23" height="14" fill="#eee" />
            <rect x="9" y="22" width="9" height="10" fill="#eee" />
          </svg>
          <Undo2 size={38} strokeWidth={3} className="ml-[26px] text-[#999]" />
          <Redo2 size={38} strokeWidth={3} className="ml-[20px] text-[#aaa]" />
          <div className="ml-[15px] flex h-[54px] w-[316px] shrink-0 items-center rounded-[5px] border-2 border-white bg-[#53782f] pl-[16px] text-[24.5px] text-white">
            <svg width="38" height="38" viewBox="0 0 38 38">
              <path d="M19 1C29 1 37 9 37 19C37 29 29 37 19 37H3L7 31C3 28 1 24 1 19C1 9 9 1 19 1Z" fill="#33482a" stroke="#1e2c18" />
              <path d="M14 12V21M24 12V21" stroke="#a8c39a" strokeWidth="3.5" strokeLinecap="round" />
            </svg>
            <span className="ml-[16px]">Chat with Erix.AI</span>
          </div>
          <div className="flex flex-1 items-center justify-center gap-[8px] pr-[636px]">
            <span className="flex h-[32px] w-[32px] items-center justify-center bg-[#d0d0d0]">
              <span className="h-[22px] w-[8px] rounded-full border-2 border-[#f0f0f0]" />
            </span>
            <span className="text-[26px] font-bold text-[#aaa]">sample.mpp</span>
          </div>
        </div>

        {/* tabs */}
        <div className="relative flex h-[75px] shrink-0 items-end border-b-[3px] border-[#bdbdbd] bg-white">
          <div className="mb-[-2px] flex h-[61px] w-[170px] shrink-0 items-center justify-center bg-[#53782f] text-[26px] tracking-[1.6px] text-white">FILE</div>
          <div className="ml-[10px] flex text-[26px] tracking-[1.6px] text-[#444]">
            {TABS.map((t, i) =>
              i === 0 ? (
                <div key={t} className="relative z-10 mb-[-3px] flex h-[61px] w-[170px] items-center justify-center border-x-2 border-t-2 border-[#bdbdbd] bg-white text-[#53782f]">{t}</div>
              ) : (
                <div key={t} className="flex h-[58px] w-[170px] items-center justify-center">{t}</div>
              ),
            )}
          </div>
          <div className="ml-[269px] mt-[15px] flex h-[50px] w-[420px] items-center self-start rounded-[10px] border-2 border-[#aaa] bg-[#fafafa] pl-[12px]">
            <svg width="22" height="32" viewBox="0 0 22 32">
              <path d="M11 0C17 0 21 5 21 10C21 15 17 17 16 23H6C5 17 1 15 1 10C1 5 5 0 11 0Z" fill="#888" />
              <rect x="7" y="25" width="8" height="6" rx="2" fill="#888" />
            </svg>
            <span className="ml-[22px] text-[25.5px] text-[#888]">Tell me what you want to do</span>
          </div>
          <span className="ml-[216px] mb-[8px] self-end whitespace-nowrap text-[26px] text-[#222]">pvmstoretest12@pp365.com</span>
          <RibbonChevron className="absolute right-[4px] top-[25px] h-[41px] w-[35px]" />
        </div>

        <RibbonBar />

        {/* banner */}
        <div className="flex h-[79px] shrink-0 items-center border-y-[3px] border-[#d08a26] bg-[#f5e199] pl-[23px]">
          <svg width="40" height="40" viewBox="0 0 40 40">
            <circle cx="20" cy="20" r="20" fill="#5477ad" />
            <circle cx="20" cy="10" r="3" fill="#fff" />
            <rect x="17.5" y="16" width="5" height="18" fill="#fff" />
          </svg>
          <span className="ml-[30px] text-[26px] text-[#111]">Exploring the sample project for free. Start your 14-day free trial to unlock all features.</span>
          <button className="ml-auto mr-[20px] flex h-[51px] w-[260px] items-center justify-center border-[3px] border-[#d08a26] text-[26px] text-[#111]">Start Free Trial</button>
        </div>

        {/* main */}
        <div className="flex min-h-0 flex-1 bg-white">
          <Sidebar />
          <div className="w-[33px] shrink-0 border-r-2 border-[#d8d8d8] bg-[#f8f8f8] pl-[7px] pt-[9px]">
            <div className="h-[532px] w-[16px] rounded-full bg-[#bdbdbd]" />
          </div>
          <div className="relative flex shrink-0 flex-col">
            <TableGrid />
            <div className="h-full border-t-2 border-[#e0e0e0] bg-[#f8f8f8] pl-[5px] pt-[6px]">
              <div className="h-[17px] w-[168px] rounded-full bg-[#bdbdbd]" />
            </div>
          </div>
          <div className="flex w-[22px] shrink-0 items-center justify-center border-x-[3px] border-black bg-[#f8f8f8]">
            <span className="mt-[-190px] h-[30px] w-[12px] rounded-full bg-[#e8e8e8]" />
          </div>
          <GanttPane />
          <div className="flex-1 border-l-[3px] border-black bg-[#f8f8f8] pl-[6px] pt-[7px]">
            <div className="h-[36px] w-[16px] rounded-full bg-[#bdbdbd]" />
          </div>
        </div>
      </div>
    </div>
  );
}
